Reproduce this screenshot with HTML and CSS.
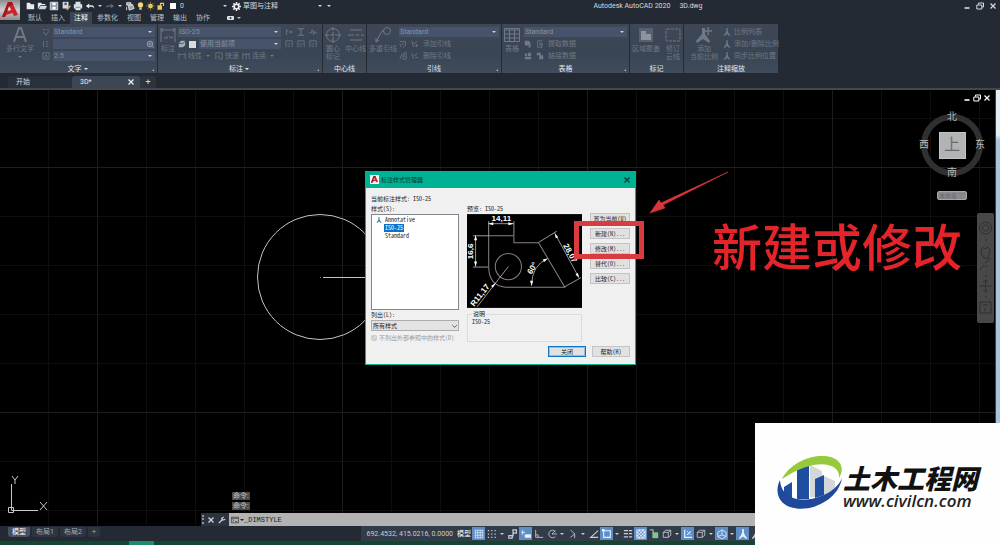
FILE: index.html
```html
<!DOCTYPE html>
<html lang="zh-CN">
<head>
<meta charset="utf-8">
<title>Autodesk AutoCAD 2020 3D.dwg</title>
<link rel="stylesheet" href="styles.css">
</head>
<body>
<svg class="defs" aria-hidden="true">
  <symbol id="restore" viewBox="0 0 8 8"><path d="M2.5 2.5V1h5v4H6M.8 3h5v4h-5z" fill="none" stroke="currentColor"/></symbol>
  <symbol id="close" viewBox="0 0 8 8"><path d="M1.5 1.5l5 5M6.5 1.5l-5 5" stroke="currentColor" stroke-width="1.2"/></symbol>
  <symbol id="min" viewBox="0 0 8 8"><path d="M1.5 6h5" stroke="currentColor" stroke-width="1.6"/></symbol>
  <symbol id="person" viewBox="0 0 12 12"><path d="M5 0h2v4l1 3 3 4-1 1-4-3-4 3-1-1 3-4 1-3z" fill="currentColor"/></symbol>
  <symbol id="box3d" viewBox="0 0 12 12"><path d="M1.5 4h6v6h-6zM1.500 4l3-2.500h6l-3 2.500M10.500 1.500v6l-3 2.500" fill="none" stroke="currentColor"/></symbol>
  <symbol id="logoA" viewBox="0 0 20 20"><path d="M2 17L8 2h4l6 13-4 1-1.500-3L6 15l-1 2z" fill="#c8262c"/><path d="M8.800 6l-1.500 5 4-1z" fill="#f3dcdc"/><path d="M8 2h4l1 3-4 1L5 17H2z" fill="#a3161c"/></symbol>
  <symbol id="dimbox" viewBox="0 0 10 10"><path d="M1 9V1h8v8M3 5h4M3 8h3" fill="none" stroke="currentColor"/></symbol>
</svg>

<header class="top">
  <button class="app" aria-label="应用程序菜单"><svg><use href="#logoA"/></svg></button>
  <div class="top-main">
    <div class="title-row">
      <div class="qat">
        <button aria-label="新建"><svg viewBox="0 0 12 12"><path d="M2 2h4l1 2h4v6H2z" fill="#e8eaed"/></svg></button>
        <button aria-label="打开"><svg viewBox="0 0 12 12"><path d="M1 10V2h4l1 1.500h4V5H4z" fill="#e8eaed"/><path d="M4 6h8l-2 4H2z" fill="#cfd4da"/></svg></button>
        <button aria-label="保存"><svg viewBox="0 0 12 12"><path d="M1.500 1.500h9v9h-9z" fill="#8b95a3" stroke="#e8eaed"/><path d="M4 2h4v3H4zM4 7h4v3H4z" fill="#fff"/></svg></button>
        <button aria-label="另存为"><svg viewBox="0 0 12 12"><path d="M2 1h7v8H2z" fill="#d8dce1"/><path d="M4 2h3v3H4z" fill="#58606c"/><path d="M6 10l5-5 1 1-4 5z" fill="#d9a866"/></svg></button>
        <button aria-label="打印"><svg viewBox="0 0 12 12"><path d="M3 1h6v3H3zM1 4h10v5H1zM3 8h6v3H3z" fill="#d9e2e4"/><path d="M3 7h6v1H3z" fill="#3c9b8e"/></svg></button>
        <button aria-label="放弃"><svg viewBox="0 0 12 12"><path d="M1 6l4-3v2h3q3 0 3 4-1-2-3-2H5v2z" fill="#e8eaed"/></svg></button><i class="caret"></i>
        <button aria-label="重做"><svg viewBox="0 0 12 12"><path d="M11 6L7 3v2H4Q1 5 1 8q1-1 3-1h3v2z" fill="#5d6672"/></svg></button><i class="caret"></i>
        <button aria-label="图层特性"><svg viewBox="0 0 12 12"><path d="M2 2h5v3H2zM4 6l5-2 2 5-6 2zM2 7v4" fill="#9aa4b0" stroke="#e8eaed"/></svg></button>
        <span class="layer-ico"><svg viewBox="0 0 12 12"><circle cx="6" cy="4.500" r="3.500" fill="#f5d773"/><path d="M4.500 8h3v3h-3z" fill="#d8d8d8"/></svg></span>
        <span class="layer-ico"><svg viewBox="0 0 12 12"><circle cx="6" cy="6" r="3" fill="#ffe08a"/><path d="M6 0v12M0 6h12M2 2l8 8M10 2l-8 8" stroke="#d9a83d" stroke-width=".7"/></svg></span>
        <span class="layer-ico"><svg viewBox="0 0 12 12"><path d="M2 5h6v6H2z" fill="#f2c662"/><path d="M6 5V2.500h4V6" fill="none" stroke="#f2c662" stroke-width="1.500"/></svg></span>
        <i class="swatch"></i>
        <label class="pick layer"><select aria-label="图层"><option>0</option></select></label>
        <svg class="gear" viewBox="0 0 12 12"><path d="M6 0v12M0 6h12M1.800 1.800l8.400 8.400M10.200 1.800l-8.400 8.400" stroke="#eee" stroke-width="2"/><circle cx="6" cy="6" r="3" fill="#232a34" stroke="#eee" stroke-width="2"/></svg>
        <label class="pick workspace"><select aria-label="工作空间"><option>草图与注释</option></select></label>
        <i class="caret"></i>
      </div>
      <h1 class="title"><span>Autodesk AutoCAD 2020</span><span>3D.dwg</span></h1>
      <div class="win-ctl">
        <button aria-label="最小化"><svg><use href="#min"/></svg></button>
        <button aria-label="还原"><svg><use href="#restore"/></svg></button>
        <button aria-label="关闭"><svg><use href="#close"/></svg></button>
      </div>
    </div>
    <nav class="menu">
      <button>默认</button><button>插入</button><button class="on">注释</button><button>参数化</button><button>视图</button><button>管理</button><button>输出</button><button>协作</button>
      <button class="rec" aria-label="显示"><svg viewBox="0 0 8 6"><rect x="0" y="1" width="7" height="4" rx="1" fill="#dfe3e8"/><circle cx="3.500" cy="3" r="1" fill="#232a34"/></svg><i class="caret"></i></button>
    </nav>
  </div>
</header>

<section class="ribbon">
  <div class="panel p-text">
    <div class="tools">
      <button class="big"><svg viewBox="0 0 16 16"><path d="M2 15L7 1h2l5 14M4 10h8" fill="none" stroke="currentColor" stroke-width="2"/></svg>多行文字<i class="caret"></i></button>
      <div class="rows">
        <div class="row"><svg class="ic" viewBox="0 0 10 10"><path d="M1 2h3M6 2h3M2 5l3 4 4-5" fill="none" stroke="currentColor"/></svg><label class="pick"><select aria-label="文字样式"><option>Standard</option></select></label></div>
        <div class="row"><svg class="ic" viewBox="0 0 10 10"><path d="M2 1v8M5 2h3M5 5h3M5 8h3" fill="none" stroke="currentColor"/></svg><span class="find"><input aria-label="查找文字"><svg viewBox="0 0 10 10"><circle cx="5" cy="5" r="3.500" fill="none" stroke="#a4adba"/><path d="M3 4h4M3 6h4M8 8l2 2" stroke="#a4adba"/></svg></span></div>
        <div class="row"><svg class="ic" viewBox="0 0 10 10"><path d="M1 1h8v8H1zM3 8l2-5 2 5" fill="none" stroke="currentColor"/></svg><label class="pick"><select aria-label="文字高度"><option>2.5</option></select></label></div>
      </div>
    </div>
    <h2>文字<i class="caret"></i><b></b></h2>
  </div>

  <div class="panel p-dim">
    <div class="tools">
      <button class="big"><svg viewBox="0 0 16 16"><path d="M1 1v14M15 1v14M1 3h14M3 1L1 3l2 2M13 1l2 2-2 2M4 11h2M7 9v3M9 9l2 2M12 9v3" fill="none" stroke="currentColor"/></svg>标注</button>
      <div class="rows">
        <div class="row"><label class="pick"><select aria-label="标注样式"><option>ISO-25</option></select></label></div>
        <div class="row"><svg class="ic lit" viewBox="0 0 10 10"><path d="M1 4l3-3h5L6 4zM1 5l5 0 3-3v5L6 9H1z" fill="currentColor"/></svg><span class="chip"></span><label class="pick"><select aria-label="标注图层"><option>使用当前项</option></select></label></div>
        <div class="row links">
          <button><svg viewBox="0 0 10 10"><path d="M1 1v8M9 1v8M1 3h8" fill="none" stroke="currentColor"/></svg>线性<i class="caret"></i></button>
          <button><svg viewBox="0 0 10 10"><path d="M1 9V1h8v8H6M5 4v4L3 6" fill="none" stroke="currentColor"/></svg>快速</button>
          <button><svg viewBox="0 0 10 10"><path d="M1 1v8M5 1v8M9 1v8M1 3h8" fill="none" stroke="currentColor"/></svg>连续<i class="caret"></i></button>
        </div>
      </div>
      <div class="mini">
        <svg viewBox="0 0 10 10"><path d="M2 1v8M5 5h5M7 3v4M4 3L1 5" fill="none" stroke="currentColor"/></svg>
        <svg viewBox="0 0 10 10"><path d="M1 1h8M1 9h8M5 1v8" fill="none" stroke="currentColor" stroke-width="1.300"/></svg>
        <svg viewBox="0 0 10 10"><path d="M0 6h3l1-4 2 6 1-4 1 2h2" fill="none" stroke="currentColor"/></svg>
        <svg><use href="#dimbox"/></svg><svg><use href="#dimbox"/></svg><svg><use href="#dimbox"/></svg>
      </div>
    </div>
    <h2>标注<i class="caret"></i><b></b></h2>
  </div>

  <div class="panel p-center">
    <div class="tools">
      <button class="big"><svg viewBox="0 0 16 16"><circle cx="8" cy="8" r="6.500" fill="none" stroke="currentColor"/><path d="M8 0v16M0 8h16" stroke="currentColor" stroke-dasharray="4 1"/></svg>圆心<br>标记</button>
      <button class="big"><svg viewBox="0 0 16 16"><path d="M2 3h12M2 13h12M0 8h6M8 8h3M13 8h3" stroke="currentColor"/></svg>中心线</button>
    </div>
    <h2>中心线</h2>
  </div>

  <div class="panel p-leader">
    <div class="tools">
      <button class="big"><svg viewBox="0 0 16 16"><circle cx="12" cy="4" r="3.500" fill="none" stroke="currentColor"/><path d="M9 4H7L1 15M1 11v4l3-2" fill="none" stroke="currentColor"/></svg>多重引线</button>
      <div class="rows">
        <div class="row"><label class="pick"><select aria-label="多重引线样式"><option>Standard</option></select></label></div>
        <div class="row links"><button><svg viewBox="0 0 10 10"><path d="M1 2h4M1 5l2 4M5 2h3v5L5 9M3 5h3" fill="none" stroke="currentColor"/></svg><svg viewBox="0 0 10 10"><path d="M1 1l2 8M3 5l5-3M5 7h4M7 5v4" fill="none" stroke="currentColor"/></svg>添加引线</button></div>
        <div class="row links"><button><svg viewBox="0 0 10 10"><path d="M1 9l3-7M6 5h3v4H5V5M6 5V1h3v3" fill="none" stroke="currentColor"/></svg><svg viewBox="0 0 10 10"><path d="M1 1l2 8M3 5l5-3M5 7h4" fill="none" stroke="currentColor"/></svg>删除引线</button></div>
      </div>
    </div>
    <h2>引线<b></b></h2>
  </div>

  <div class="panel p-table">
    <div class="tools">
      <button class="big"><svg viewBox="0 0 16 16"><path d="M.5 1.500h15v13H.5zM.5 3h15M.5 7h15M.5 11h15M5.500 3v12M10.500 3v12" fill="none" stroke="currentColor"/></svg>表格</button>
      <div class="rows">
        <div class="row"><label class="pick"><select aria-label="表格样式"><option>Standard</option></select></label></div>
        <div class="row links"><button><svg viewBox="0 0 10 10"><path d="M1 1h5l2 2v4H1zM6 5l3 3-3 2z" fill="currentColor"/></svg><svg viewBox="0 0 10 10"><path d="M8 1H2v8h4M4 4h4M4 6h5M7 5v5" fill="none" stroke="currentColor"/></svg>提取数据</button></div>
        <div class="row links"><button><svg viewBox="0 0 10 10"><path d="M1 2h3v3H1zM5 1h4v4H5zM1 6h8v3H1z" fill="currentColor"/></svg><svg viewBox="0 0 10 10"><path d="M1 1h5v3H1zM4 4h5v5H4z" fill="currentColor"/></svg>链接数据</button></div>
      </div>
    </div>
    <h2>表格<b></b></h2>
  </div>

  <div class="panel p-mark">
    <div class="tools">
      <button class="big"><svg viewBox="0 0 16 16"><path d="M1 1h14v14H1z" fill="#566070"/><path d="M3 4h5v3h5v6H3z" fill="#8b94a1"/></svg>区域覆盖</button>
      <button class="big"><svg viewBox="0 0 16 16"><rect x="1" y="2" width="14" height="12" rx="1" fill="none" stroke="currentColor" stroke-dasharray="3 1"/></svg>修订<br>云线</button>
    </div>
    <h2>标记</h2>
  </div>

  <div class="panel p-scale">
    <div class="tools">
      <button class="big"><svg viewBox="0 0 16 16"><path d="M6 1h3v6l5 7-1 2-6-4-6 4-1-2 6-7z" fill="currentColor"/><path d="M12 0v8M8 4h8" stroke="currentColor" stroke-width="1.500"/></svg>添加<br>当前比例</button>
      <div class="rows">
        <div class="row links"><button><svg><use href="#person"/></svg>比例列表</button></div>
        <div class="row links"><button><svg><use href="#person"/></svg>添加/删除比例</button></div>
        <div class="row links"><button><svg><use href="#person"/></svg>同步比例位置</button></div>
      </div>
    </div>
    <h2>注释缩放</h2>
  </div>
</section>

<nav class="files">
  <button class="tab">开始</button>
  <button class="tab on">3D*<svg><use href="#close"/></svg></button>
  <button class="add" aria-label="新图形">+</button>
</nav>

<main class="canvas">
  <svg class="drawing" aria-hidden="true">
    <circle cx="320" cy="187" r="62.500" fill="none" stroke="#c4c4c4"/>
    <path d="M323 187.500H380" stroke="#c4c4c4"/><path d="M320 187.500h1" stroke="#777"/>
  </svg>
  <svg class="ucs" viewBox="0 0 48 44" aria-hidden="true"><path d="M5.500 33.500h5v5h-5zM8.500 10v26M8.500 36.500H35M9 2l3 4 3-4M12 6v4M37 28l7 8M44 28l-7 8" fill="none" stroke="#c9c9c9"/></svg>

  <div class="win-ctl doc-ctl">
    <button aria-label="最小化"><svg><use href="#min"/></svg></button>
    <button aria-label="还原"><svg><use href="#restore"/></svg></button>
    <button aria-label="关闭"><svg><use href="#close"/></svg></button>
  </div>
  <div class="cube">
    <span class="n">北</span><span class="w">西</span><button class="face">上</button><span class="e">东</span><span class="s">南</span>
  </div>
  <button class="wcs">未命名 ▽</button>
  <div class="navbar">
    <svg viewBox="0 0 17 110" fill="none" stroke="#2f2f2f"><circle cx="8.500" cy="15" r="6"/><circle cx="8.500" cy="15" r="3"/><path d="M8 27h2M8 53h2M8 63h2M8 84h2M4 40q0-8 4-4 4-4 5 2l-2 7H7zM3 57l4-5M8 50l6-5M8.500 67v12M2.500 73h12M6 69l2.500-2 2.500 2M6 77l2.500 2 2.500-2M3 89h11v11H3zM6 92h5M8 95v3"/></svg>
  </div>
  <i class="edge"></i>

  <section class="dialog" role="dialog" aria-labelledby="dlg-title">
    <header class="dlg-head"><svg viewBox="0 0 20 20"><rect width="20" height="20" fill="#f4f4f4"/><use href="#logoA"/></svg><h2 id="dlg-title">标注样式管理器</h2><button aria-label="关闭"><svg><use href="#close"/></svg></button></header>
    <div class="dlg-body">
      <p class="current">当前标注样式: ISO-25</p>
      <div class="dlg-cols">
        <div class="col-list">
          <span class="lbl">样式(S):</span>
          <ul class="styles">
            <li><svg><use href="#person"/></svg><span>Annotative</span></li>
            <li><span class="sel">ISO-25</span></li>
            <li><span>Standard</span></li>
          </ul>
          <label class="lbl" for="list-by">列出(L):</label>
          <div class="combo"><select id="list-by"><option>所有样式</option></select><svg viewBox="0 0 8 8"><path d="M1.500 3L4 5.500 6.500 3" fill="none" stroke="#555"/></svg></div>
          <label class="check"><input type="checkbox" checked disabled>不列出外部参照中的样式(D)</label>
        </div>
        <div class="col-preview">
          <span class="lbl">预览: ISO-25</span>
          <svg class="preview" viewBox="0 0 114 93">
            <rect width="114" height="93" fill="#000"/>
            <g fill="none" stroke="#8c7f7c"><path d="M21.500 21.500V53Q22 71 38 72.500H97L71 28.500H46.500V21.500z"/><circle cx="41" cy="52" r="13"/></g>
            <g fill="none" stroke="#b9b9b9" stroke-width=".8"><path d="M21.500 21V7M46.500 21V7M21.500 9.500h25M6 21.500h16M6 52.500h15M8.500 21v31M41 52L10 92M71 28l18-11M97 72l16-9M87 19l24 44M64 71Q64 51 80 44"/></g>
            <path d="M21 9.500l5-1.500v3zM46 9.500L41 8v3zM8.500 21L7 26h3zM8.500 52L7 47h3zM29 68l-5 3 1.500 2zM87 19l1 5 2.500-1zM111 63l-3.500-3 2.500-1.500zM64 71l-1.500-5h3zM80 44l-5 1 1.500 2.500z" fill="#fff"/>
            <g class="dims"><text x="34" y="7">14,11</text><text transform="translate(6 37) rotate(-90)">16,6</text><text transform="translate(15 82) rotate(-52)">R11,17</text><text transform="translate(67 55) rotate(-60)">60°</text><text transform="translate(100 40) rotate(61)">28,07</text></g>
          </svg>
          <fieldset class="desc"><legend>说明</legend>ISO-25</fieldset>
        </div>
        <div class="col-btns">
          <button>置为当前(U)</button><button>新建(N)...</button><button>修改(M)...</button><button>替代(O)...</button><button>比较(C)...</button>
        </div>
      </div>
      <footer class="dlg-foot"><button class="primary">关闭</button><button>帮助(H)</button></footer>
    </div>
  </section>

  <i class="mark-box"></i>
  <svg class="arrow" viewBox="0 0 80 44" aria-hidden="true"><path d="M79 1L14 34l2 3L1 42l9-13 2 3L79 1z" fill="#d9363a" stroke="#d9363a" stroke-width=".6"/></svg>
  <p class="callout">新建或修改</p>

  <div class="cmd">
    <span class="hist">命令:</span>
    <span class="hist">命令:</span>
    <div class="cmd-line">
      <i class="grip"></i>
      <button aria-label="关闭"><svg><use href="#close"/></svg></button>
      <button aria-label="自定义"><svg viewBox="0 0 10 10"><path d="M1 9l4-4M5 2q-1 3 2 3l2-1M5 5V3l2-2" fill="none" stroke="currentColor" stroke-width="1.500"/></svg></button>
      <div class="cmd-in"><svg viewBox="0 0 10 8"><path d="M.5.500h9v7h-9zM.5 2h9M2 3.500l1.500 1L2 6M5 6h3" fill="none" stroke="#444"/></svg><i class="caret"></i><input aria-label="命令行" value="_DIMSTYLE"></div>
    </div>
  </div>
</main>

<footer class="status">
  <nav class="layouts"><button class="on">模型</button><button>布局1</button><button>布局2</button><button>+</button></nav>
  <div class="modes">
    <span class="coords">692.4532, 415.0216, 0.0000</span><button class="model">模型</button>
    <button class="on" aria-label="栅格"><svg viewBox="0 0 12 12"><path d="M1 1.500h10M1 4.500h10M1 7.500h10M1 10.500h10M1.500 1v10M4.500 1v10M7.500 1v10M10.500 1v10" stroke="currentColor" stroke-width=".8"/></svg></button>
    <button aria-label="捕捉"><svg viewBox="0 0 12 12"><path d="M1 2h11M1 6h11M1 10h11" stroke="currentColor" stroke-width="1.500" stroke-dasharray="1.500 2.500"/></svg></button><i class="caret"></i>
    <button aria-label="推断约束"><svg viewBox="0 0 12 12"><path d="M6 9V1h4v4H6M1 8h4v3H1z" fill="none" stroke="currentColor" stroke-width="1.500"/></svg></button>
    <button class="on" aria-label="动态输入"><svg viewBox="0 0 12 12"><path d="M2 1v6M0 4h5M5 7h7v3H5z" fill="currentColor" stroke="currentColor"/></svg></button>
    <button aria-label="正交"><svg viewBox="0 0 12 12"><path d="M2 1v9h9M2 7h3v3" fill="none" stroke="currentColor"/></svg></button>
    <button aria-label="极轴"><svg viewBox="0 0 12 12"><path d="M10 3a4.500 4.500 0 1 0 0 6M6 6h6M6 6l4-4" fill="none" stroke="currentColor"/></svg></button><i class="caret"></i>
    <button aria-label="等轴测"><svg viewBox="0 0 12 12"><path d="M3 1l5 5v5M8 6l-5 4" fill="none" stroke="currentColor"/></svg></button><i class="caret"></i>
    <button aria-label="对象捕捉追踪"><svg viewBox="0 0 12 12"><path d="M11 2L2 10h9" fill="none" stroke="currentColor" stroke-width="1.300"/></svg></button>
    <button class="on" aria-label="对象捕捉"><svg viewBox="0 0 12 12"><path d="M2 2h8v8H2z" fill="none" stroke="currentColor" stroke-width="1.300"/><path d="M0 0h3v3H0z" fill="currentColor"/></svg></button><i class="caret"></i>
    <button aria-label="线宽"><svg viewBox="0 0 12 12"><path d="M1 2h10M1 5.500h10M1 9.500h10" stroke="currentColor" stroke-width="1.600" stroke-dasharray="5 1"/></svg></button>
    <button class="on" aria-label="透明度"><svg viewBox="0 0 12 12"><path d="M1 1h10v10H1z" fill="none" stroke="currentColor"/><path d="M1 3h2v2H1zM5 3h2v2H5zM9 3h2v2H9zM3 5h2v2H3zM7 5h2v2H7zM1 7h2v2H1zM5 7h2v2H5zM9 7h2v2H9zM3 1h2v2H3zM7 1h2v2H7zM3 9h2v2H3zM7 9h2v2H7z" fill="currentColor"/></svg></button>
    <button aria-label="选择循环"><svg viewBox="0 0 12 12"><path d="M1 1h4v4" fill="none" stroke="#ddd"/><path d="M4 4h7v7H4z" fill="#79c79a"/></svg></button>
    <button aria-label="三维对象捕捉"><svg><use href="#box3d"/></svg></button><i class="caret"></i>
    <button class="on" aria-label="动态 UCS"><svg viewBox="0 0 12 12"><path d="M2 1v9h9M5 7l4-4M5 3h1M9 6v1" fill="none" stroke="currentColor" stroke-width="1.400"/></svg></button>
    <button aria-label="选择过滤"><svg><use href="#box3d"/></svg></button><i class="caret"></i>
    <button class="on" aria-label="小控件"><svg viewBox="0 0 12 12"><path d="M6 1l5 3v5l-5 3-5-3V4zM6 1v6M6 7l-5 2M6 7l5 2" fill="none" stroke="currentColor"/></svg></button><i class="caret"></i>
    <button class="on" aria-label="注释可见性"><svg><use href="#person"/></svg></button>
    <button aria-label="自动缩放"><svg><use href="#person"/></svg></button>
  </div>
</footer>
<div class="taskbar"><i></i></div>

<aside class="brand">
  <svg viewBox="0 0 66 54" aria-hidden="true">
    <path d="M20 12L32 7v36H20z" fill="#1e4ea0"/><path d="M33 9l12 6v26H33z" fill="#d5d6d8"/>
    <path d="M7 31l8-5v16H7zM38 23l9-4v20l-9 3z" fill="#1e4ea0"/><path d="M47 20l11 5v7L47 40z" fill="#d5d6d8"/>
    <path d="M5 23C15 3 46-6 60 4c6 5 6 12 2 18C64 7 39 0 5 23z" fill="#97c93c"/>
    <path d="M3 24C-2 34 0 46 13 51c21 7 49-8 52-29C57 44 5 56 3 24z" fill="#20489b"/>
  </svg>
  <div class="brand-text"><strong>土木工程网</strong><a href="#">www.civilcn.com</a></div>
</aside>
</body>
</html>
```

FILE: styles.css
```css
* { box-sizing: border-box; }

body {
  margin: 0;
  min-height: 100vh;
  display: flex;
  flex-direction: column;
  position: relative;
  background: #232a34;
  color: #d5dae1;
  font: 7px/8px Roboto, "Noto Sans CJK SC", sans-serif;
  overflow: hidden;
}

button, select, input {
  font: inherit;
  color: inherit;
  background: none;
  border: 0;
  margin: 0;
  padding: 0;
  border-radius: 0;
}
select { appearance: none; width: 100%; }
h1, h2, p, ul { margin: 0; padding: 0; font: inherit; }
ul { list-style: none; }
svg { display: block; }
.defs { position: absolute; width: 0; height: 0; }

.caret { width: 8px; height: 8px; display: inline-grid; place-items: center; flex: none; }
.caret::after, .pick::after {
  content: "";
  border: 2px solid transparent;
  border-top-color: currentColor;
  border-bottom: 0;
}

/* title and menu */
.top { display: flex; height: 24px; }
.app { width: 20px; height: 20px; background: linear-gradient(#8c8c8c, #cfcfcf 50%, #8a8a8a); }
.app svg { width: 20px; height: 20px; }
.top-main { flex: 1; display: flex; flex-direction: column; }
.title-row { display: flex; justify-content: space-between; align-items: center; height: 12px; }
.qat { display: flex; align-items: center; padding-left: 4px; }
.qat > button { width: 12px; height: 12px; display: grid; place-items: center; }
.qat button svg { width: 10px; height: 10px; }
.layer-ico { width: 10px; }
.layer-ico svg { width: 9px; height: 10px; }
.gear { width: 9px; height: 9px; margin: 0 2px; }
.swatch { width: 6px; height: 6px; background: #fff; margin: 0 4px 0 4px; }
.pick { display: flex; align-items: center; padding-right: 3px; flex: 1; min-width: 0; }
.pick.layer { flex: none; width: 50px; }
.pick.workspace { flex: none; width: 82px; }
.title { display: flex; gap: 9px; }
.win-ctl { display: flex; gap: 5px; padding-right: 3px; }
.win-ctl svg { width: 8px; height: 8px; }
.menu { display: flex; padding-left: 4px; height: 12px; align-items: center; gap: 1px; color: #b9c0ca; }
.menu button { padding: 1px 4px; height: 12px; line-height: 10px; }
.menu .on { background: #3b4554; color: #fff; }
.menu .rec { display: flex; align-items: center; margin-left: 8px; }
.rec svg { width: 8px; height: 6px; }

/* ribbon */
.ribbon { display: flex; height: 49px; gap: 1px; color: #6f7886; }
.panel { display: flex; flex-direction: column; background: linear-gradient(#3f4756, #394553 60%, #404b5c); flex: none; }
.tools { display: flex; flex: 1; padding: 3px 2px 0; gap: 2px; }
.panel h2 { height: 9px; display: flex; justify-content: center; align-items: center; color: #e3e7ec; position: relative; }
.panel h2 b { position: absolute; right: 3px; bottom: 2px; border: 1px solid transparent; border-right-color: #a9b1bc; border-bottom-color: #a9b1bc; }
.big { display: flex; flex-direction: column; align-items: center; justify-content: flex-start; flex: none; }
.big svg { width: 16px; height: 16px; margin-bottom: 2px; }
.rows { display: flex; flex-direction: column; gap: 2px; flex: 1; min-width: 0; }
.row { display: flex; align-items: center; height: 10px; gap: 3px; }
.row svg, .mini svg { width: 8px; height: 8px; flex: none; }
.row .pick, .find { background: #46536a; height: 10px; color: #8993a2; padding-left: 1px; }
.row .pick::after { border-top-color: #cdd3db; }
.find { display: flex; align-items: center; flex: 1; padding-right: 1px; }
.find input { flex: 1; min-width: 0; }
.ic.lit { color: #a4adb9; }
.chip { width: 7px; height: 7px; background: #d8dce2; }
.links button { display: flex; align-items: center; gap: 3px; white-space: nowrap; }
.mini { display: grid; grid-template-columns: repeat(3, 9px); grid-auto-rows: 10px; gap: 2px 3px; align-content: start; align-items: center; padding: 0 2px; }
.p-text { width: 157px; }
.p-text .tools { padding-left: 6px; }
.p-text .big { padding-right: 6px; }
.p-dim { width: 164px; }
.p-dim .links { gap: 3px; }
.p-dim .links button { gap: 2px; }
.p-center { width: 43px; }
.p-center .tools { gap: 4px; }
.p-leader { width: 134px; }
.p-leader .links button { gap: 4px; }
.p-table { width: 127px; }
.p-table .rows { padding-left: 2px; }
.p-table .links button { gap: 4px; }
.p-mark { width: 53px; }
.p-mark .tools { gap: 5px; }
.p-scale { width: 94px; }
.p-scale .tools { padding-left: 6px; gap: 5px; }

/* file tabs */
.files { display: flex; height: 17px; padding: 3px 0 0 8px; border-bottom: 2px solid #46474b; }
.files .tab { width: 64px; height: 12px; text-align: left; padding: 0 8px; background: #29313c; display: flex; align-items: center; justify-content: space-between; border-radius: 3px 3px 0 0; }
.files .tab.on { background: #3d4654; color: #eef0f3; width: 68px; padding-right: 5px; }
.files svg { width: 8px; height: 8px; }
.files .add { width: 16px; font-size: 9px; background: #2c343f; border-radius: 0 3px 0 0; }

/* drawing area */
.canvas {
  flex: 1;
  position: relative;
  overflow: hidden;
  background:
    repeating-linear-gradient(90deg, #1c1c1c 0 1px, transparent 1px 245px) 97px 0 / 245px 245px,
    repeating-linear-gradient(#1e1e1e 0 1px, transparent 1px 245px) 0 77px / 245px 245px,
    repeating-linear-gradient(90deg, #0e0e0e 0 1px, transparent 1px 49px) 48px 0 / 49px 49px,
    repeating-linear-gradient(#0e0e0e 0 1px, transparent 1px 49px) 0 28px / 49px 49px,
    #000;
}
.drawing { position: absolute; inset: 0; width: 100%; height: 100%; }
.ucs { position: absolute; left: 3px; bottom: 8px; width: 48px; height: 44px; }
.doc-ctl { position: absolute; right: 9px; top: 4px; gap: 2px; padding: 0; color: #fff; }
.edge { position: absolute; right: 0; top: 0; bottom: 0; width: 5px; background: linear-gradient(#e3eef7 0 45px, #a9c4dc 50px); border-left: 1px solid #31435a; }
.cube {
  position: absolute;
  right: 11px;
  top: 18px;
  width: 74px;
  height: 74px;
  display: grid;
  grid-template: 18px 1fr 18px / 18px 1fr 18px;
  place-items: center;
  color: #b8b8b8;
  font-size: 10px;
  line-height: 12px;
}
.cube::before { content: ""; position: absolute; inset: 6px; border: 6px solid #303030; border-radius: 50%; }
.cube > * { position: relative; }
.cube .n, .cube .s { grid-column: 2; }
.cube .n { grid-row: 1; }
.cube .w, .cube .face, .cube .e { grid-row: 2; }
.cube .s { grid-row: 3; }
.cube .face { width: 27px; height: 27px; background: #b1b3b5; color: #6a6e73; font-size: 16px; line-height: 24px; border: 1px solid #c4c4c4; }
.wcs { position: absolute; right: 33px; top: 101px; width: 30px; height: 9px; border-radius: 2px; background: #8b8b8d; color: #66676b; font-size: 6px; line-height: 7px; border: 1px solid #a6a6a6; white-space: nowrap; }
.navbar { position: absolute; right: 6px; top: 123px; width: 17px; height: 110px; background: #484848; border-radius: 2px; }
.navbar svg { width: 17px; height: 110px; }

/* dialog */
.dialog { position: absolute; left: 365px; top: 81px; width: 271px; background: #f0f0f0; color: #222; border: 1px solid #00b294; border-top: 0; font: 6px/8px "Noto Sans Mono CJK SC", "Noto Sans CJK SC", "Liberation Mono", monospace; }
.dlg-head { display: flex; align-items: center; gap: 2px; height: 17px; background: #00b294; padding: 0 4px; color: #06362d; }
.dlg-head > svg { width: 9px; height: 9px; }
.dlg-head h2 { flex: 1; }
.dlg-head button svg { width: 8px; height: 8px; }
.dlg-body { padding: 7px 5px 7px; display: flex; flex-direction: column; }
.current { height: 9px; }
.dlg-cols { display: grid; grid-template-columns: 88px 115px 40px; justify-content: space-between; }
.lbl { display: block; height: 10px; line-height: 10px; }
.styles { height: 96px; background: #fff; border: 1px solid #82878f; padding: 1px; }
.styles li { display: grid; grid-template-columns: 10px auto; align-items: center; height: 8px; column-gap: 1px; justify-content: start; }
.styles li span { grid-column: 2; padding: 0 1px; }
.styles li svg { width: 6px; height: 6px; margin-left: 3px; color: #2a8f95; }
.styles .sel { background: #0a73c9; color: #fff; }
.combo { position: relative; display: flex; align-items: center; height: 11px; border: 1px solid #adadad; background: #e3e3e3; padding-left: 1px; }
.combo svg { width: 8px; height: 8px; }
.check { display: flex; align-items: center; gap: 2px; color: #9a9a9a; margin-top: 3px; white-space: nowrap; }
.check input { width: 6px; height: 6px; }
.preview { width: 115px; height: 94px; }
.dims { fill: #fff; font: bold 8px "Liberation Sans", sans-serif; text-anchor: middle; }
.desc { border: 1px solid #dcdcdc; margin: 2px 0 0; padding: 0 4px; height: 32px; min-width: 0; }
.desc legend { padding: 0 1px; }
.col-btns { display: flex; flex-direction: column; gap: 4px; padding-top: 9px; }
.col-btns button, .dlg-foot button { height: 11px; background: #e1e1e1; border: 1px solid #c4c4c4; line-height: 8px; white-space: nowrap; }
.dlg-foot { display: flex; justify-content: flex-end; gap: 6px; margin-top: 4px; }
.dlg-foot button { width: 38px; }
.dlg-foot .primary { border-color: #0b76c4; outline: 1px solid #8dbfe3; outline-offset: -2px; }

/* annotation */
.mark-box { position: absolute; left: 574px; top: 131px; width: 70px; height: 38px; border: 5px solid #d93b40; }
.arrow { position: absolute; left: 649px; top: 81px; width: 80px; height: 44px; }
.callout { position: absolute; left: 712px; top: 124px; font: 500 50px/60px "Noto Sans CJK SC", sans-serif; color: #e3252b; white-space: nowrap; }

/* command line */
.cmd { position: absolute; left: 201px; right: 0; bottom: 0; display: flex; flex-direction: column; align-items: flex-start; gap: 2px; }
.hist { margin-left: 31px; padding: 0 1px; background: #4b4b4b; color: #c8c8c8; }
.cmd-line { align-self: stretch; display: flex; align-items: center; height: 13px; margin-top: 1px; background: #2c3440; gap: 3px; }
.cmd-line svg { width: 8px; height: 8px; }
.grip { width: 2px; height: 9px; margin-left: 1px; border-left: 2px dotted #8c939d; }
.cmd-in { flex: 1; display: flex; align-items: center; height: 13px; background: #b3b3b3; color: #222; padding-left: 2px; font-family: "Liberation Mono", monospace; }
.cmd-in .caret { width: 5px; }
.cmd-in input { flex: 1; }

/* status bar */
.status { display: flex; height: 15px; align-items: stretch; }
.layouts { width: 361px; flex: none; display: flex; align-items: center; gap: 2px; padding: 0 0 4px 8px; color: #a2abb7; }
.layouts button { height: 10px; padding: 0 4px; line-height: 10px; background: #2d3541; border-radius: 0 0 3px 3px; }
.layouts .on { background: #465061; color: #fff; }
.modes { display: flex; align-items: center; flex: 1; background: #323b48; color: #c8ced6; }
.modes button { width: 13px; height: 13px; display: grid; place-items: center; flex: none; }
.modes svg { width: 10px; height: 10px; }
.modes .on { background: #5d8fc6; color: #e9f1fa; }
.modes .model { width: 16px; color: #fff; }
.coords { width: 95px; flex: none; text-align: right; padding-right: 3px; white-space: nowrap; }
.taskbar { height: 4px; background: #12462f; padding-left: 129px; }
.taskbar i { display: block; width: 25px; height: 4px; background: #1d8a6c; }

/* site badge */
.brand { position: absolute; right: 0; bottom: 0; width: 245px; height: 122px; background: #fefefe; display: flex; align-items: center; padding: 0 0 2px 22px; color: #111; }
.brand svg { width: 66px; height: 54px; flex: none; }
.brand-text { display: flex; flex-direction: column; gap: 1px; padding-top: 6px; white-space: nowrap; }
.brand strong { font: italic 900 27px/27px "Noto Sans CJK SC", sans-serif; }
.brand a { color: #222; text-decoration: none; font: italic 600 17px/17px "Open Sans", "Noto Sans", sans-serif; }
```
